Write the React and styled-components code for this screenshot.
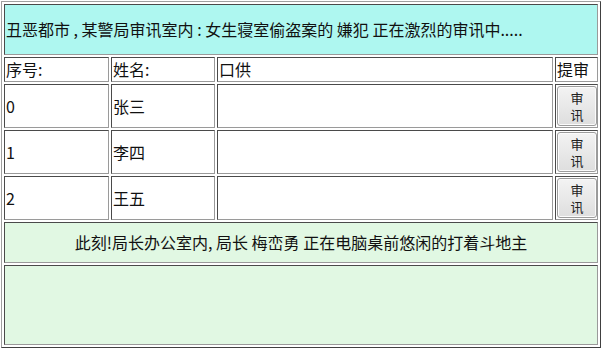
import React from "react";
import styled, { createGlobalStyle } from "styled-components";

const Global = createGlobalStyle`
  html, body { margin: 0; padding: 0; background: #ffffff; }
  body { font-family: "Noto Sans CJK SC", "Noto Sans", sans-serif; }
`;

const Page = styled.div`
  padding: 1px 0 0 1px;
`;

const Table = styled.table`
  width: 600px;
  border-collapse: separate;
  border-spacing: 2px;
  border: 1px solid;
  border-color: #a0a0a0 #404040 #404040 #a0a0a0;
  background: #ffffff;
  font-size: 16px;
  line-height: 21px;
  color: #111;
  table-layout: fixed;
`;

const Cell = styled.td`
  border: 1px solid;
  border-color: #4a4a4a #9a9a9a #9a9a9a #4a4a4a;
  padding: 0 1px;
  height: ${(p) => p.$h}px;
  background: ${(p) => p.$bg || "#ffffff"};
  text-align: ${(p) => (p.$center ? "center" : "left")};
  vertical-align: middle;
  white-space: nowrap;
  overflow: hidden;
  box-sizing: border-box;
`;

const Col = styled.col`
  width: ${(p) => p.$w}px;
`;

const Btn = styled.button`
  display: block;
  width: 40px;
  height: 40px;
  margin: 0 auto;
  padding: 0 7px;
  border: 1px solid #9c9c9c;
  border-radius: 3px;
  background: linear-gradient(#f3f3f3, #dedede);
  font-family: "Noto Sans CJK SC", sans-serif;
  font-size: 13px;
  line-height: 17px;
  color: #222;
  white-space: normal;
  word-break: break-all;
  box-shadow: inset 0 0 0 1px #fbfbfb;
`;

const rows = [
  { id: 0, name: "张三" },
  { id: 1, name: "李四" },
  { id: 2, name: "王五" },
];

export default function App() {
  return (
    <Page>
      <Global />
      <Table>
        <colgroup>
          <Col $w={105} />
          <Col $w={104} />
          <Col $w={336} />
          <Col $w={43} />
        </colgroup>
        <tbody>
          <tr>
            <Cell colSpan={4} $h={51} $bg="#aef7f0">
              丑恶都市 , 某警局审讯室内 : 女生寝室偷盗案的 嫌犯 正在激烈的审讯中.....
            </Cell>
          </tr>
          <tr>
            <Cell $h={25}>序号:</Cell>
            <Cell $h={25}>姓名:</Cell>
            <Cell $h={25}>口供</Cell>
            <Cell $h={25}>提审</Cell>
          </tr>
          {rows.map((r) => (
            <tr key={r.id}>
              <Cell $h={44}>{r.id}</Cell>
              <Cell $h={44}>{r.name}</Cell>
              <Cell $h={44}></Cell>
              <Cell $h={44}>
                <Btn>审讯</Btn>
              </Cell>
            </tr>
          ))}
          <tr>
            <Cell colSpan={4} $h={41} $bg="#e1f8e3" $center>
              此刻!局长办公室内, 局长 梅峦勇 正在电脑桌前悠闲的打着斗地主
            </Cell>
          </tr>
          <tr>
            <Cell colSpan={4} $h={80} $bg="#e1f8e3"></Cell>
          </tr>
        </tbody>
      </Table>
    </Page>
  );
}
